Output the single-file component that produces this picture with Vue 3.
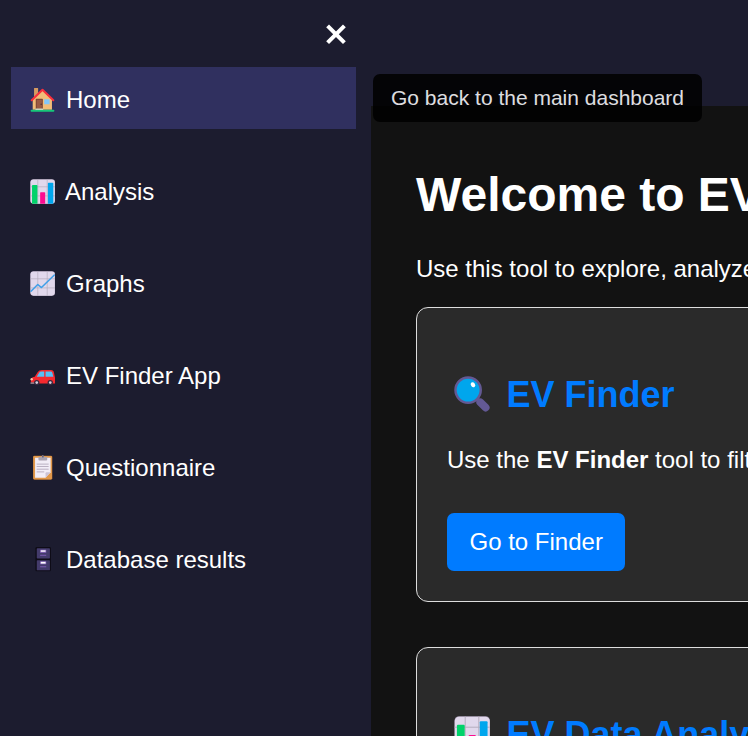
<script setup>
import { h } from 'vue'

const items = [
  { label: 'Home', icon: 'home', active: true },
  { label: 'Analysis', icon: 'bars' },
  { label: 'Graphs', icon: 'graph' },
  { label: 'EV Finder App', icon: 'car' },
  { label: 'Questionnaire', icon: 'clipboard' },
  { label: 'Database results', icon: 'cabinet' },
]

const rect = (x, y, width, height, fill, rx = 0) => h('rect', { x, y, width, height, fill, rx })
const path = (d, fill, stroke, width) =>
  h('path', { d, fill: fill || 'none', stroke, 'stroke-width': width, 'stroke-linejoin': 'round', 'stroke-linecap': 'round' })

const tile = () => [
  rect(1, 0.5, 73, 73, '#998da5', 9),
  rect(1.5, 1.5, 72, 71.5, '#e1d8ec', 9),
  path('M23 2V73M51 2V73M2 23H73M2 50H73', null, '#b4acbc', 2),
]

const shapes = {
  home: () => [
    rect(12, 3, 12, 32, '#d59b61', 1),
    path('M8 36L37 10L65 36V67H8Z', '#f2bd78'),
    rect(17, 35, 21, 32, '#7d4533', 2),
    rect(20, 38, 15, 28, '#9a5a43'),
    h('circle', { cx: 33, cy: 51, r: 2, fill: '#452b28' }),
    rect(42, 36, 16, 15, '#83c7fa', 1),
    path('M5 39L37 8L69 39', null, '#f92f3c', 6),
    rect(2, 67, 70, 6, '#16c77a', 2),
    rect(16, 64, 23, 4, '#c7d6bd', 1),
  ],
  bars: () => [
    ...tile(),
    path('M6 73V20Q6 18 8 18H20Q22 18 22 20V73Z', '#00d26a'),
    path('M30 73V41Q30 39 32 39H43Q45 39 45 41V73Z', '#fc0c90'),
    path('M53 73V13Q53 11 55 11H67Q69 11 69 13V73Z', '#00a6ed'),
  ],
  graph: () => [...tile(), path('M3 60L23 40L34 49L72 12', null, '#3f9fe8', 4.5)],
  car: () => [
    path('M3 49Q5 41 14 41L23 27Q27 21 35 21H62Q70 21 71 29L74 44V61H5Q1 58 3 49Z', '#f5292f'),
    path('M20 41L27 29Q29 25 34 25H42V41Z', '#57bff5'),
    path('M46 25H61Q65 25 66 29L69 41H46Z', '#57bff5'),
    h('circle', { cx: 5, cy: 48, r: 3.5, fill: '#f8c9aa' }),
    rect(1, 57, 14, 5, '#8d7782', 2),
    h('circle', { cx: 20, cy: 58, r: 8, fill: '#35283f' }),
    h('circle', { cx: 20, cy: 58, r: 4, fill: '#d5cedb' }),
    h('circle', { cx: 60, cy: 58, r: 8, fill: '#35283f' }),
    h('circle', { cx: 60, cy: 58, r: 4, fill: '#d5cedb' }),
  ],
  clipboard: () => [
    rect(9, 2, 57, 71, '#b97436', 4),
    rect(10, 3, 55, 69, '#e1984a', 4),
    path('M15 8H61V51L46 67H15Z', '#f2edf7'),
    path('M46 67V54Q46 51 49 51H61Z', '#cdc3d6'),
    path('M21 27H54M21 34H54M21 42H54M21 50H41', null, '#b0a5b8', 2.5),
    path('M25 6H33Q38 -4 43 6H51V14Q51 16 48 16H28Q25 16 25 14Z', '#a9a2b0'),
    h('circle', { cx: 38, cy: 5, r: 2.5, fill: '#665c6c' }),
  ],
  cabinet: () => [
    rect(16, 0, 46, 72, '#0e0c17', 4),
    rect(20, 4, 39, 30, '#433b6b', 2),
    rect(20, 39, 39, 30, '#433b6b', 2),
    rect(30, 8, 18, 9, '#8b68be', 1),
    rect(32, 10, 14, 4, '#fff'),
    rect(30, 23, 18, 3, '#7c59b2'),
    rect(30, 42, 18, 9, '#8b68be', 1),
    rect(32, 44, 14, 5, '#fff'),
    rect(30, 57, 18, 3, '#7c59b2'),
  ],
  search: () => [
    path('M48 48L56 56', null, '#635994', 8),
    path('M54 54L65 65', null, '#635994', 16),
    h('circle', { cx: 29, cy: 29, r: 26, fill: '#00a6ed', stroke: '#635994', 'stroke-width': 5 }),
    h('ellipse', { cx: 39, cy: 18, rx: 4.2, ry: 5.5, fill: '#fff', transform: 'rotate(-35 39 18)' }),
  ],
}

const Glyph = (props) => h('svg', { viewBox: '0 0 74 74', 'aria-hidden': 'true' }, shapes[props.name]())
Glyph.props = ['name']
</script>

<template>
  <div class="page">
    <aside class="sidebar">
      <button class="close" aria-label="Close menu">
        <svg viewBox="0 0 20 20"><path d="M1.6 0.9L18.4 17.7M18.4 0.9L1.6 17.7" /></svg>
      </button>
      <nav>
        <a v-for="item in items" :key="item.label" class="item" :class="[item.icon, { active: item.active }]">
          <Glyph class="icon" :name="item.icon" />
          <span>{{ item.label }}</span>
          <span v-if="item.active" class="tooltip">Go back to the main dashboard</span>
        </a>
      </nav>
    </aside>
    <main class="content">
      <h1>Welcome to EV</h1>
      <p class="intro">Use this tool to explore, analyze</p>
      <section class="card">
        <h2><Glyph class="icon" name="search" /><span>EV Finder</span></h2>
        <p>Use the <strong>EV Finder</strong> tool to filter</p>
        <a class="button">Go to Finder</a>
      </section>
      <section class="card">
        <h2><Glyph class="icon" name="bars" /><span>EV Data Analysis</span></h2>
      </section>
    </main>
  </div>
</template>

<style>
body {
  background: #1c1c2f;
}
</style>

<style scoped>
.page {
  display: flex;
  height: 736px;
  overflow: hidden;
  background: #1c1c2f;
  color: #fff;
  font: 24px/28px "Liberation Sans", Arial, sans-serif;
  white-space: nowrap;
}
.page * {
  box-sizing: border-box;
}
.sidebar {
  flex: none;
  width: 371px;
  padding: 25px 15px 0 11px;
}
.close {
  display: block;
  width: 20px;
  height: 20px;
  margin: 0 10px 22px auto;
  padding: 0;
  border: 0;
  background: none;
}
.close svg {
  display: block;
  width: 20px;
  height: 20px;
  overflow: visible;
}
.close path {
  stroke: #fff;
  stroke-width: 4;
}
nav {
  display: flex;
  flex-direction: column;
  gap: 30px;
}
.item {
  position: relative;
  display: flex;
  gap: 11px;
  height: 62px;
  padding: 19px 19px 0;
}
.item.bars {
  gap: 10px;
}
.active {
  background: #30305f;
}
.item .icon {
  width: 25px;
  height: 25px;
  margin-top: 1px;
}
.tooltip {
  position: absolute;
  left: 362px;
  top: 7px;
  z-index: 1;
  width: 329px;
  height: 48px;
  padding: 10px 18px;
  border-radius: 7px;
  background: #000;
  font-size: 21px;
  opacity: 0.85;
}
.content {
  flex: none;
  width: 1100px;
  margin-top: 106px;
  padding: 61px 45px 0;
  background: #121212;
}
h1 {
  margin: 0 0 32px;
  font-size: 48px;
  line-height: 56px;
}
p {
  margin: 0;
}
.intro {
  margin-bottom: 24px;
}
.card {
  height: 295px;
  margin-bottom: 45px;
  padding: 66px 30px 0;
  border: 1px solid #ddd;
  border-radius: 12px;
  background: #2a2a2a;
}
h2 {
  display: flex;
  gap: 17px;
  margin: 0 0 30px 6.5px;
  color: #007bff;
  font-size: 36px;
  line-height: 42px;
}
h2 .icon {
  width: 36px;
  height: 36px;
  margin-top: 2px;
}
.button {
  display: inline-block;
  height: 58px;
  margin-top: 39px;
  padding: 15px 22.5px;
  border-radius: 7px;
  background: #007bff;
}
</style>
